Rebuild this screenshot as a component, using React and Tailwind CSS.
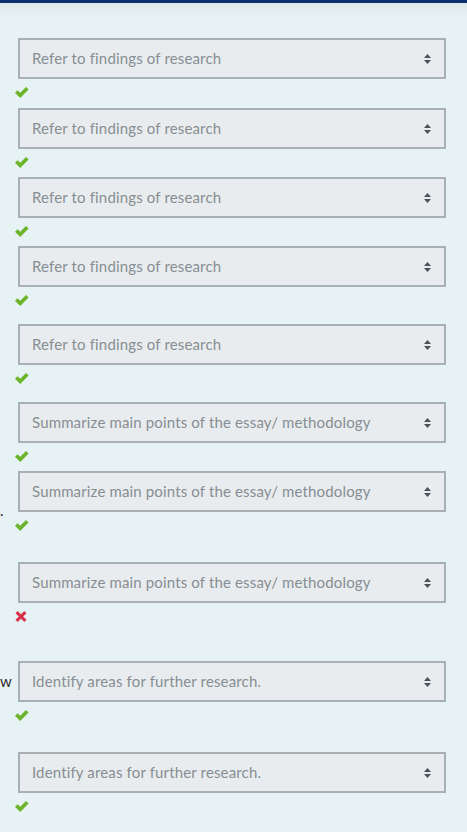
import React from "react";

const REFER = "Refer to findings of research";
const SUMM = "Summarize main points of the essay/ methodology";
const IDENT = "Identify areas for further research.";

// each row: select + mark underneath, mt is the gap from the previous row
const rows = [
  { text: REFER, ok: true, mt: "mt-[35px]" },
  { text: REFER, ok: true, mt: "mt-[9px]" },
  { text: REFER, ok: true, mt: "mt-[8px]" },
  { text: REFER, ok: true, mt: "mt-[8px]" },
  { text: REFER, ok: true, mt: "mt-[17px]" },
  { text: SUMM, ok: true, mt: "mt-[17px]" },
  { text: SUMM, ok: true, mt: "mt-[8px]", lead: ".", leadCls: "self-end translate-y-[6px]" },
  { text: SUMM, ok: false, mt: "mt-[30px]" },
  { text: IDENT, ok: true, mt: "mt-[38px]", lead: "w" },
  { text: IDENT, ok: true, mt: "mt-[30px]" },
];

function SortIcon() {
  return (
    <svg width="7" height="10" viewBox="0 0 7 10" className="text-[#4b5258]">
      <path d="M3.5 0 L7 4 L0 4 Z" fill="currentColor" />
      <path d="M0 6 L7 6 L3.5 10 Z" fill="currentColor" />
    </svg>
  );
}

function Check() {
  return (
    <svg width="14" height="11" viewBox="0 0 14 11">
      <path d="M0 5.8 L2.6 3.2 L5.2 5.8 L11 0 L13.6 2.6 L5.2 11 Z" fill="#6cb42c" />
    </svg>
  );
}

function Cross() {
  return (
    <svg width="12" height="11" viewBox="0 0 12 11">
      <path
        d="M0.5 2.2 L2.7 0 L6 3.3 L9.3 0 L11.5 2.2 L8.2 5.5 L11.5 8.8 L9.3 11 L6 7.7 L2.7 11 L0.5 8.8 L3.8 5.5 Z"
        fill="#d8324b"
      />
    </svg>
  );
}

function Row({ text, ok, mt, lead, leadCls }) {
  return (
    <div className={`${mt} flex flex-col`}>
      <div className="flex items-center">
        <span className={`w-[18px] text-[15px] text-[#2b2b2b] leading-none ${leadCls || ""}`}>
          {lead || ""}
        </span>
        <div className="flex h-[41px] w-[428px] items-center justify-between border-2 border-[#a9b0b5] bg-[#e8ecef] pl-3 pr-[13px] text-[15px] tracking-[0.15px] text-[#878e93] [font-variant-ligatures:none]">
          <span>{text}</span>
          <SortIcon />
        </div>
      </div>
      <div className="flex h-[20px] items-start pl-[15px] pt-[8px]">
        {ok ? <Check /> : <Cross />}
      </div>
    </div>
  );
}

export default function App() {
  return (
    <div
      className="min-h-screen bg-[#e7f2f4] pb-4"
      style={{ fontFamily: "Lato, 'Open Sans', sans-serif" }}
    >
      <div className="h-[3px] bg-[#0c2e6d]" />
      <div className="h-[14px] bg-gradient-to-b from-[#dde8eb] to-[#e7f2f4]" />
      <div className="-mt-[14px] flex flex-col">
        {rows.map((r, i) => (
          <Row key={i} {...r} />
        ))}
      </div>
    </div>
  );
}
